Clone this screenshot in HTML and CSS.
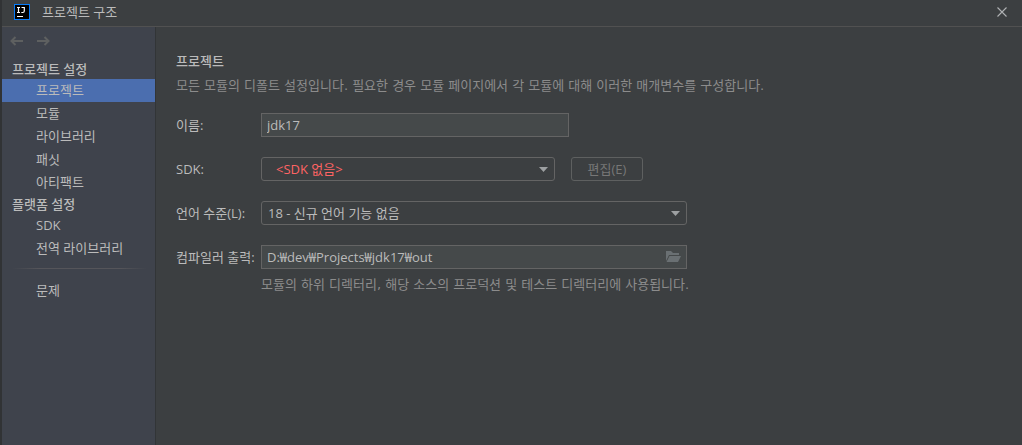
FILE: index.html
```html
<!DOCTYPE html>
<html lang="ko">
<head>
<meta charset="utf-8">
<title>프로젝트 구조</title>
<link rel="stylesheet" href="styles.css">
</head>
<body>
<div class="dialog">
  <header class="titlebar">
    <svg class="logo" width="16" height="16" viewBox="0 0 16 16" aria-hidden="true">
      <rect width="16" height="16" fill="#087cfa"/>
      <rect x="1" y="1" width="14" height="14" fill="#000"/>
      <path d="M3 3.500h3M4.500 3.500v5M3 8.500h3M7.500 3.500h3M10.300 3v4q0 1.500-1.500 1.500h-1.500" fill="none" stroke="#fff" stroke-width="1.200"/>
      <rect x="3" y="12" width="6" height="1" fill="#fff"/>
    </svg>
    <h1 class="title">프로젝트 구조</h1>
    <button class="close" type="button" aria-label="닫기">
      <svg width="10" height="10" viewBox="0 0 10 10"><path d="M.5.5l9 9M9.500.5l-9 9" stroke="#b0b2b4" stroke-width="1.100"/></svg>
    </button>
  </header>
  <div class="body">
    <nav class="sidebar">
      <div class="history">
        <button class="arrow" type="button" aria-label="뒤로" disabled>
          <svg width="14" height="10" viewBox="0 0 14 10"><path d="M13 5H1.500M5.500 1l-4 4 4 4" fill="none" stroke="#5e6060" stroke-width="2"/></svg>
        </button>
        <button class="arrow" type="button" aria-label="앞으로" disabled>
          <svg width="14" height="10" viewBox="0 0 14 10"><path d="M0 5h11.500M7.500 1l4 4-4 4" fill="none" stroke="#5e6060" stroke-width="2"/></svg>
        </button>
      </div>
      <h2 class="group">프로젝트 설정</h2>
      <a class="item selected" href="#project" aria-current="page">프로젝트</a>
      <a class="item" href="#modules">모듈</a>
      <a class="item" href="#libraries">라이브러리</a>
      <a class="item" href="#facets">패싯</a>
      <a class="item" href="#artifacts">아티팩트</a>
      <h2 class="group">플랫폼 설정</h2>
      <a class="item" href="#sdks">SDK</a>
      <a class="item" href="#global">전역 라이브러리</a>
      <hr class="divider">
      <a class="item" href="#problems">문제</a>
    </nav>
    <main class="content">
      <h2 class="heading">프로젝트</h2>
      <p class="note">모든 모듈의 디폴트 설정입니다. 필요한 경우 모듈 페이지에서 각 모듈에 대해 이러한 매개변수를 구성합니다.</p>
      <form class="form">
        <label for="name">이름:</label>
        <input class="field name" id="name" type="text" value="jdk17">

        <label for="sdk">SDK:</label>
        <div class="row">
          <div class="combo sdk">
            <select class="missing" id="sdk"><option>&lt;SDK 없음&gt;</option></select>
            <svg class="caret" width="9" height="5" viewBox="0 0 9 5"><path d="M0 0h9L4.500 5z" fill="#9da0a2"/></svg>
          </div>
          <button class="edit" type="button" disabled>편집(E)</button>
        </div>

        <label for="level">언어 수준(L):</label>
        <div class="combo wide">
          <select id="level"><option>18 - 신규 언어 기능 없음</option></select>
          <svg class="caret" width="9" height="5" viewBox="0 0 9 5"><path d="M0 0h9L4.500 5z" fill="#9da0a2"/></svg>
        </div>

        <label for="output">컴파일러 출력:</label>
        <div class="field browse wide">
          <input id="output" type="text" value="D:₩dev₩Projects₩jdk17₩out">
          <button class="folder" type="button" aria-label="찾아보기">
            <svg width="15" height="12" viewBox="0 0 15 12"><path d="M0 0h5l2 2h6v2H3L0 10zM3.500 5H15l-3 6H.5z" fill="#6a7073"/></svg>
          </button>
        </div>
      </form>
      <p class="hint">모듈의 하위 디렉터리, 해당 소스의 프로덕션 및 테스트 디렉터리에 사용됩니다.</p>
    </main>
  </div>
</div>
</body>
</html>
```
FILE: styles.css
```css
* {
  box-sizing: border-box;
}

body {
  margin: 0;
  background: #3c3f41;
  color: #bbbbbb;
  font: 13px/20px "Open Sans", "Noto Sans CJK KR", sans-serif;
}

h1, h2, p {
  margin: 0;
  font-size: 13px;
  font-weight: 400;
}

button, input, select {
  margin: 0;
  padding: 0;
  border: 0;
  background: none;
  color: inherit;
  font: inherit;
}

.dialog {
  display: flex;
  flex-direction: column;
  min-height: 100vh;
  border-left: 2px solid #313335;
}

.titlebar {
  display: flex;
  align-items: center;
  gap: 12px;
  height: 27px;
  padding: 0 15px 2px 12px;
  border-bottom: 1px solid #515151;
}

.title {
  flex: 1;
}

.close, .arrow, .folder {
  display: flex;
}

.body {
  display: flex;
  flex: 1;
}

.sidebar {
  flex: none;
  width: 154px;
  border-right: 1px solid #323537;
  background: #3f434c;
}

.history {
  display: flex;
  gap: 13px;
  height: 32px;
  padding: 9px 8px;
}

.group {
  height: 20px;
  padding-left: 10px;
  font-weight: 500;
}

.item {
  display: block;
  height: 23px;
  padding-left: 34px;
  color: inherit;
  line-height: 23px;
  text-decoration: none;
}

.selected {
  background: #4b6eaf;
}

.divider {
  height: 1px;
  margin: 8px 8px 10px 10px;
  border: 0;
  background: linear-gradient(90deg, transparent, #55555a 20%, #55555a 80%, transparent);
}

.content {
  flex: 1;
  padding: 24px 20px;
}

.heading {
  font-weight: 500;
}

.note, .hint {
  color: #8c8c8c;
  font-family: "DejaVu Sans", "Noto Sans CJK KR", sans-serif;
}

.note {
  margin-top: 5px;
}

.form {
  display: grid;
  grid-template-columns: 85px 1fr;
  gap: 20px 0;
  align-items: center;
  margin-top: 17px;
}

.form label {
  white-space: nowrap;
}

.row {
  display: flex;
  gap: 16px;
}

.field {
  height: 24px;
  border: 1px solid #646464;
  background: #45494a;
}

.name {
  width: 308px;
  padding: 0 5px;
}

.combo {
  display: flex;
  position: relative;
  height: 24px;
  border: 1px solid #646464;
  border-radius: 3px;
}

.combo select {
  width: 100%;
  padding: 0 24px 0 6px;
  appearance: none;
}

.combo .missing {
  padding-left: 14px;
  color: #ff6464;
}

.caret {
  position: absolute;
  top: 9px;
  right: 6px;
  pointer-events: none;
}

.sdk {
  width: 294px;
}

.wide {
  width: 426px;
}

.edit {
  width: 72px;
  height: 24px;
  border: 1px solid #5e6060;
  border-radius: 3px;
  color: #777777;
}

.browse {
  display: flex;
  align-items: center;
  padding: 0 5px;
}

.browse input {
  flex: 1;
  min-width: 0;
}

.hint {
  margin: 6px 0 0 85px;
}
```
